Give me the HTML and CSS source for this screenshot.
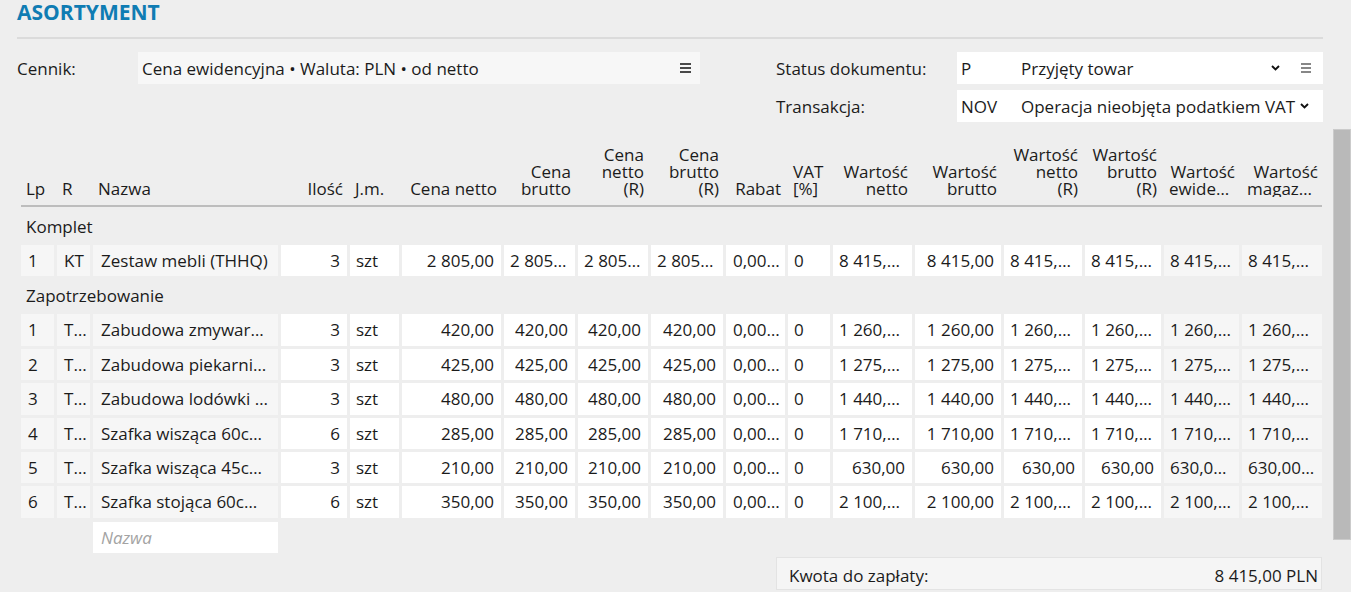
FILE: index.html
```html
<!DOCTYPE html>
<html lang="pl">
<head>
<meta charset="utf-8">
<title>Asortyment</title>
<link rel="stylesheet" href="styles.css">
</head>
<body>
<div class="page">
  <h1 class="title">ASORTYMENT</h1>
  <div class="divider"></div>

  <div class="form">
    <div class="form-left">
      <span class="label label-cennik">Cennik:</span>
      <div class="field field-grey field-cennik">
        <span class="val">Cena ewidencyjna • Waluta: PLN • od netto</span>
        <svg class="ico-menu" width="11" height="10" viewBox="0 0 11 10"><path d="M0 1h11M0 5h11M0 9h11" stroke="#111" stroke-width="1.4" fill="none"/></svg>
      </div>
    </div>
    <div class="form-right">
      <span class="label">Status dokumentu:</span>
      <div class="field field-status">
        <span class="code">P</span>
        <span class="val">Przyjęty towar</span>
        <svg class="ico-chev" width="9" height="6" viewBox="0 0 9 6"><path d="M1 1l3.5 3.5L8 1" stroke="#111" stroke-width="1.9" fill="none"/></svg>
        <svg class="ico-menu ico-menu-thin" width="10" height="10" viewBox="0 0 10 10"><path d="M0 1h10M0 5h10M0 9h10" stroke="#111" stroke-width="1.2" fill="none"/></svg>
      </div>
      <span class="label">Transakcja:</span>
      <div class="field field-trans">
        <span class="code">NOV</span>
        <span class="val">Operacja nieobjęta podatkiem VAT</span>
        <svg class="ico-chev" width="9" height="6" viewBox="0 0 9 6"><path d="M1 1l3.5 3.5L8 1" stroke="#111" stroke-width="1.9" fill="none"/></svg>
      </div>
    </div>
  </div>

  <div class="table">
    <div class="row head">
      <div class="h">Lp</div>
      <div class="h">R</div>
      <div class="h">Nazwa</div>
      <div class="h r">Ilość</div>
      <div class="h">J.m.</div>
      <div class="h r">Cena netto</div>
      <div class="h r">Cena<br>brutto</div>
      <div class="h r">Cena<br>netto<br>(R)</div>
      <div class="h r">Cena<br>brutto<br>(R)</div>
      <div class="h r">Rabat</div>
      <div class="h">VAT<br>[%]</div>
      <div class="h r">Wartość<br>netto</div>
      <div class="h r">Wartość<br>brutto</div>
      <div class="h r">Wartość<br>netto<br>(R)</div>
      <div class="h r">Wartość<br>brutto<br>(R)</div>
      <div class="h r"><span class="hl">Wartość</span><span class="hl">ewidencyjna</span></div>
      <div class="h r"><span class="hl">Wartość</span><span class="hl">magazynowa</span></div>
    </div>

    <div class="group">Komplet</div>
    <div class="row data">
      <div class="c g">1</div><div class="c g k">KT</div><div class="c g">Zestaw mebli (THHQ)</div>
      <div class="c r">3</div><div class="c">szt</div>
      <div class="c r">2 805,00</div><div class="c r">2 805,00</div><div class="c r">2 805,00</div><div class="c r">2 805,00</div>
      <div class="c">0,00 %</div><div class="c">0</div>
      <div class="c r">8 415,00</div><div class="c r">8 415,00</div><div class="c r">8 415,00</div><div class="c r">8 415,00</div>
      <div class="c r g">8 415,0000</div><div class="c r g">8 415,0000</div>
    </div>

    <div class="group">Zapotrzebowanie</div>
    <div class="row data">
      <div class="c g">1</div><div class="c g k">TW</div><div class="c g">Zabudowa zmywarki 45cm</div>
      <div class="c r">3</div><div class="c">szt</div>
      <div class="c r">420,00</div><div class="c r">420,00</div><div class="c r">420,00</div><div class="c r">420,00</div>
      <div class="c">0,00 %</div><div class="c">0</div>
      <div class="c r">1 260,00</div><div class="c r">1 260,00</div><div class="c r">1 260,00</div><div class="c r">1 260,00</div>
      <div class="c r g">1 260,0000</div><div class="c r g">1 260,0000</div>
    </div>
    <div class="row data">
      <div class="c g">2</div><div class="c g k">TW</div><div class="c g">Zabudowa piekarnika 60cm</div>
      <div class="c r">3</div><div class="c">szt</div>
      <div class="c r">425,00</div><div class="c r">425,00</div><div class="c r">425,00</div><div class="c r">425,00</div>
      <div class="c">0,00 %</div><div class="c">0</div>
      <div class="c r">1 275,00</div><div class="c r">1 275,00</div><div class="c r">1 275,00</div><div class="c r">1 275,00</div>
      <div class="c r g">1 275,0000</div><div class="c r g">1 275,0000</div>
    </div>
    <div class="row data">
      <div class="c g">3</div><div class="c g k">TW</div><div class="c g">Zabudowa lodówki (60cm)</div>
      <div class="c r">3</div><div class="c">szt</div>
      <div class="c r">480,00</div><div class="c r">480,00</div><div class="c r">480,00</div><div class="c r">480,00</div>
      <div class="c">0,00 %</div><div class="c">0</div>
      <div class="c r">1 440,00</div><div class="c r">1 440,00</div><div class="c r">1 440,00</div><div class="c r">1 440,00</div>
      <div class="c r g">1 440,0000</div><div class="c r g">1 440,0000</div>
    </div>
    <div class="row data">
      <div class="c g">4</div><div class="c g k">TW</div><div class="c g">Szafka wisząca 60cm górna</div>
      <div class="c r">6</div><div class="c">szt</div>
      <div class="c r">285,00</div><div class="c r">285,00</div><div class="c r">285,00</div><div class="c r">285,00</div>
      <div class="c">0,00 %</div><div class="c">0</div>
      <div class="c r">1 710,00</div><div class="c r">1 710,00</div><div class="c r">1 710,00</div><div class="c r">1 710,00</div>
      <div class="c r g">1 710,0000</div><div class="c r g">1 710,0000</div>
    </div>
    <div class="row data">
      <div class="c g">5</div><div class="c g k">TW</div><div class="c g">Szafka wisząca 45cm górna</div>
      <div class="c r">3</div><div class="c">szt</div>
      <div class="c r">210,00</div><div class="c r">210,00</div><div class="c r">210,00</div><div class="c r">210,00</div>
      <div class="c">0,00 %</div><div class="c">0</div>
      <div class="c r">630,00</div><div class="c r">630,00</div><div class="c r">630,00</div><div class="c r">630,00</div>
      <div class="c r g">630,0000</div><div class="c r g">630,0000</div>
    </div>
    <div class="row data">
      <div class="c g">6</div><div class="c g k">TW</div><div class="c g">Szafka stojąca 60cm dolna</div>
      <div class="c r">6</div><div class="c">szt</div>
      <div class="c r">350,00</div><div class="c r">350,00</div><div class="c r">350,00</div><div class="c r">350,00</div>
      <div class="c">0,00 %</div><div class="c">0</div>
      <div class="c r">2 100,00</div><div class="c r">2 100,00</div><div class="c r">2 100,00</div><div class="c r">2 100,00</div>
      <div class="c r g">2 100,0000</div><div class="c r g">2 100,0000</div>
    </div>
    <div class="row newrow">
      <div class="c placeholder">Nazwa</div>
    </div>
  </div>

  <div class="footer">
    <div class="total">
      <span>Kwota do zapłaty:</span>
      <span>8 415,00 PLN</span>
    </div>
  </div>

  <div class="scrollbar"></div>
</div>
</body>
</html>
```

FILE: styles.css
```css
html, body {
  margin: 0;
  padding: 0;
}

body {
  background: #eeeeee;
  font-family: "Open Sans", "Noto Sans", "DejaVu Sans", sans-serif;
  font-size: 17px;
  color: #1b1b1b;
}

.page {
  position: relative;
  width: 1351px;
  height: 592px;
  overflow: hidden;
  box-sizing: border-box;
  padding: 0 28px 0 17px;
}

.title {
  margin: -2px 0 0 0;
  font-size: 21px;
  line-height: 28px;
  font-weight: 700;
  color: #0f7cb3;
}

.divider {
  margin-top: 11px;
  height: 2px;
  background: #dbdbdb;
}

/* ---------- form ---------- */
.form {
  display: flex;
  align-items: flex-start;
  margin-top: 13px;
}

.form-left {
  display: flex;
  align-items: center;
  width: 683px;
}

.label-cennik {
  width: 121px;
  flex: none;
}

.label {
  white-space: nowrap;
  display: flex;
  align-items: center;
}

.form-right {
  margin-left: 76px;
  display: grid;
  grid-template-columns: 181px 366px;
  row-gap: 6px;
}

.field {
  height: 32px;
  display: flex;
  align-items: center;
  background: #ffffff;
  box-sizing: border-box;
  white-space: nowrap;
  overflow: hidden;
}

.field-grey {
  background: #f7f7f7;
}

.field-cennik {
  width: 562px;
  padding: 0 9px 0 4px;
}

.field .val {
  flex: 1;
  min-width: 0;
  overflow: hidden;
}

.field .code {
  width: 60px;
  flex: none;
}

.field-status {
  padding: 0 12px 0 4px;
}

.field-trans {
  padding: 0 14px 0 4px;
}

.ico-chev {
  flex: none;
  margin-left: 4px;
}

.ico-menu {
  flex: none;
}

.ico-menu-thin {
  margin-left: 21px;
}

/* ---------- table ---------- */
.table {
  margin: 23px 1px 0 4px;
  display: flex;
  flex-direction: column;
}

.row {
  display: grid;
  grid-template-columns: 33px 33px 185px 66px 49px 99px 71px 70px 72px 59px 42px 79px 86px 78px 76px 75px 80px;
  column-gap: 3px;
}

.head {
  height: 62px;
  box-sizing: border-box;
  border-bottom: 2px solid #bdbdbd;
  align-items: end;
}

.h {
  padding: 0 4px 8px 5px;
  line-height: 17px;
  white-space: nowrap;
}

.hl {
  display: block;
  overflow: hidden;
  text-overflow: ellipsis;
}

.r {
  text-align: right;
}

.group {
  height: 38px;
  display: flex;
  align-items: center;
  padding-left: 5px;
}

.data {
  height: 31.4px;
}

.data + .data {
  margin-top: 3px;
}

.c {
  background: #ffffff;
  padding: 0 7px 0 6px;
  line-height: 31.4px;
  white-space: nowrap;
  overflow: hidden;
  text-overflow: ellipsis;
}

.c.g {
  background: #f6f6f6;
}

.c.g:first-child,
.c.k {
  padding-left: 7px;
}

.c.k {
  padding-right: 3px;
}

.data > .c:nth-child(3) {
  padding-left: 8px;
}

.data > .c:nth-child(10) {
  padding: 0 3px 0 7px;
}

.newrow {
  margin-top: 4px;
  height: 31px;
}

.placeholder {
  grid-column: 3;
  padding-left: 8px;
  line-height: 31px;
  color: #a3a3a3;
  font-style: italic;
}

/* ---------- footer ---------- */
.footer {
  display: flex;
  justify-content: flex-end;
  margin-top: 4px;
  padding-right: 1px;
}

.total {
  width: 546px;
  height: 33px;
  box-sizing: border-box;
  background: #f5f5f5;
  border: 1px solid #e3e3e3;
  display: flex;
  justify-content: space-between;
  align-items: center;
  padding: 4px 3px 0 12px;
}

/* ---------- scrollbar overlay ---------- */
.scrollbar {
  position: absolute;
  left: 1333px;
  top: 129px;
  width: 18px;
  height: 411px;
  box-sizing: border-box;
  background: #b9b9b9;
  border: 1px solid #cbcbcb;
}
```
